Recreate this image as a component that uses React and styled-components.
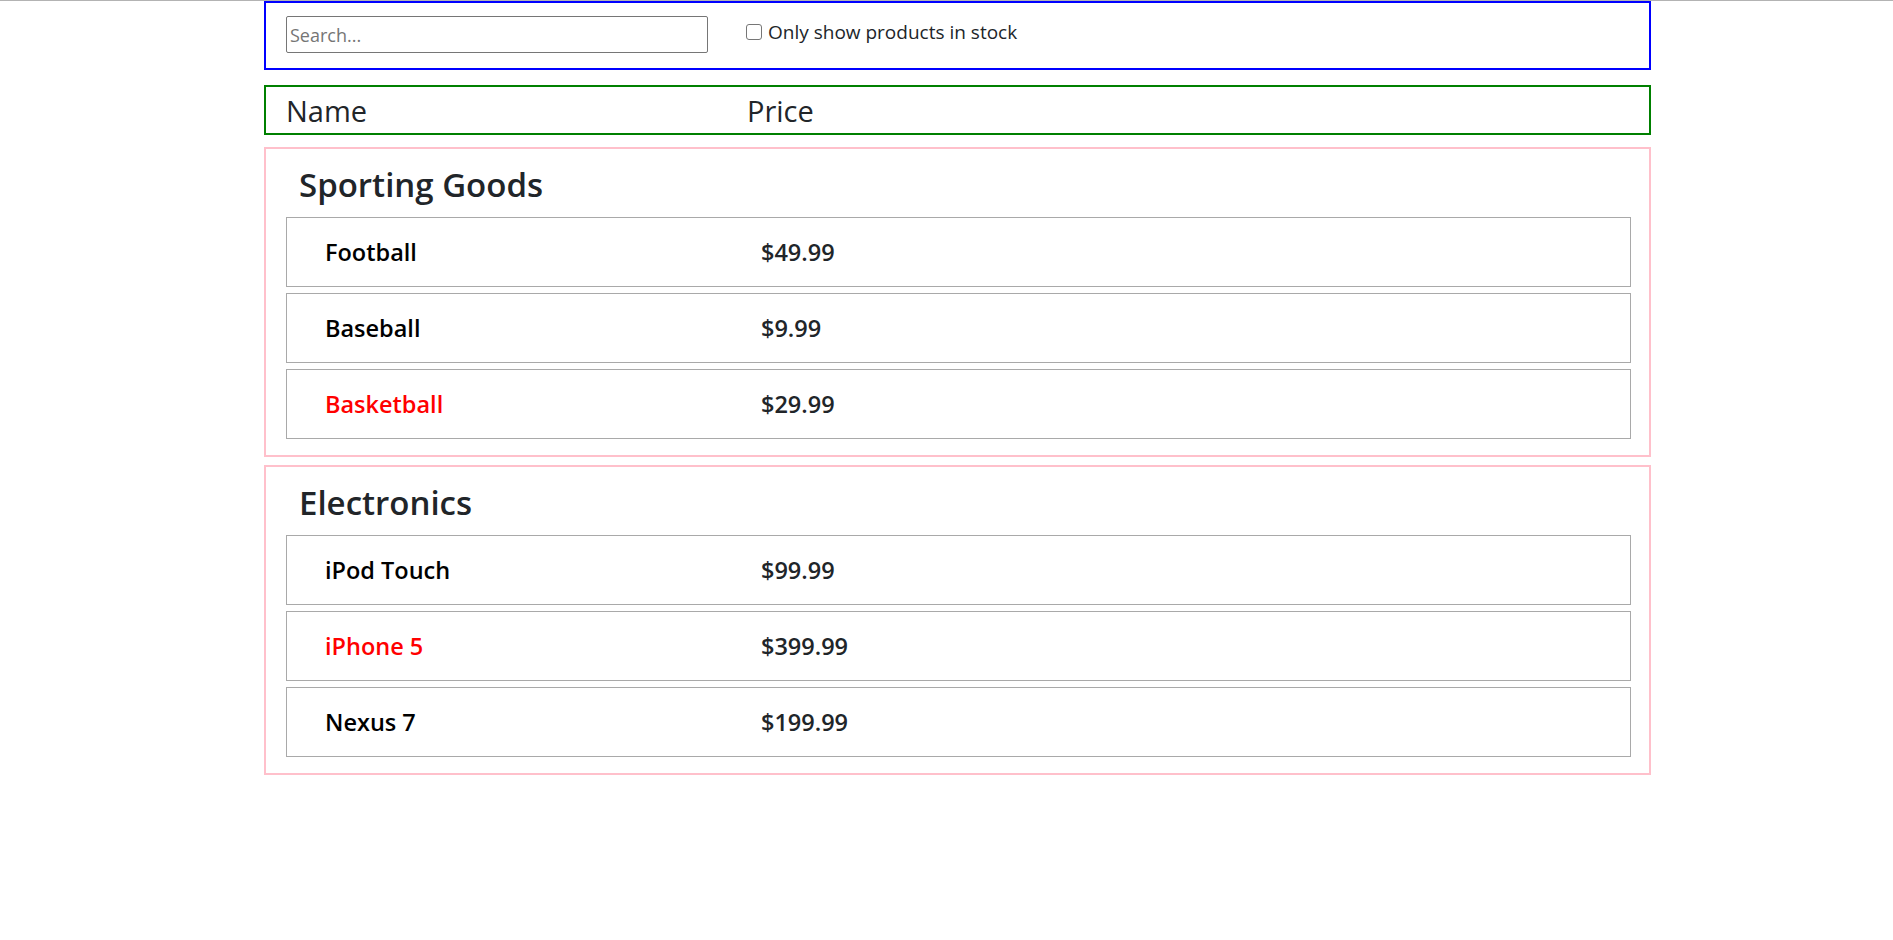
import React from 'react'
import styled, { createGlobalStyle } from 'styled-components'

const PRODUCTS = [
  { category: 'Sporting Goods', price: '$49.99', stocked: true, name: 'Football' },
  { category: 'Sporting Goods', price: '$9.99', stocked: true, name: 'Baseball' },
  { category: 'Sporting Goods', price: '$29.99', stocked: false, name: 'Basketball' },
  { category: 'Electronics', price: '$99.99', stocked: true, name: 'iPod Touch' },
  { category: 'Electronics', price: '$399.99', stocked: false, name: 'iPhone 5' },
  { category: 'Electronics', price: '$199.99', stocked: true, name: 'Nexus 7' },
]

const GlobalStyle = createGlobalStyle`
html, body {
  margin:0;
  padding:0;
  background:#fff;
}
body {
  border-top:1px solid #b3b3b3;
  font-family:'Open Sans', sans-serif;
  color:#212529;
}
`

const Page = styled.div`
display:flex;
flex-direction:column;
width:1387px;
margin-left:264px;
`

const SearchBar = styled.div`
display:flex;
align-items:flex-start;
height:69px;
box-sizing:border-box;
border:2px solid #0000ff;
padding:13px 20px 0;
`

const SearchInput = styled.input`
box-sizing:border-box;
width:422px;
height:37px;
margin:0;
border:1px solid #767676;
border-radius:2px;
padding:0 3px;
font-family:inherit;
font-size:18px;
color:#212529;
outline:none;
&::placeholder {
  color:#757575;
}
`

const StockLabel = styled.label`
display:flex;
align-items:center;
gap:6px;
height:26px;
margin:3px 0 0 38px;
font-size:19px;
line-height:26px;
`

const Check = styled.input`
appearance:none;
margin:0;
width:16px;
height:16px;
box-sizing:border-box;
border:1px solid #767676;
border-radius:3px;
background:#fff;
`

const TableHead = styled.div`
display:grid;
grid-template-columns:461px 1fr;
height:50px;
box-sizing:border-box;
margin-top:14.7px;
border:2px solid #008000;
padding:1px 20px 0;
font-size:29px;
line-height:45px;
`

const Category = styled.section`
margin-top:${(props) => (props.$first ? '12.6px' : '8.6px')};
border:2px solid pink;
padding:13px 18px 16px 20px;
`

const CategoryTitle = styled.h2`
margin:0 0 10px 13px;
font-size:33px;
font-weight:600;
line-height:45px;
`

const Rows = styled.div`
display:flex;
flex-direction:column;
gap:6.6px;
`

const Row = styled.div`
display:grid;
grid-template-columns:436px 1fr;
align-items:center;
height:69.4px;
box-sizing:border-box;
border:1px solid darkgray;
padding:1px 0 0 38px;
font-size:23.5px;
font-weight:600;
line-height:32px;
`

const ProductName = styled.span`
color:${(props) => (props.$out ? '#ff0000' : '#000')};
`

const Price = styled.span`
color:#212529;
`

const App = () => {
  const categories = [...new Set(PRODUCTS.map((p) => p.category))]

  return (
    <>
      <GlobalStyle />
      <Page>
        <SearchBar>
          <SearchInput placeholder="Search..." />
          <StockLabel>
            <Check type="checkbox" />
            Only show products in stock
          </StockLabel>
        </SearchBar>
        <TableHead>
          <span>Name</span>
          <span>Price</span>
        </TableHead>
        {categories.map((cat, i) => (
          <Category key={cat} $first={i === 0}>
            <CategoryTitle>{cat}</CategoryTitle>
            <Rows>
              {PRODUCTS.filter((p) => p.category === cat).map((p) => (
                <Row key={p.name}>
                  <ProductName $out={!p.stocked}>{p.name}</ProductName>
                  <Price>{p.price}</Price>
                </Row>
              ))}
            </Rows>
          </Category>
        ))}
      </Page>
    </>
  )
}

export default App
